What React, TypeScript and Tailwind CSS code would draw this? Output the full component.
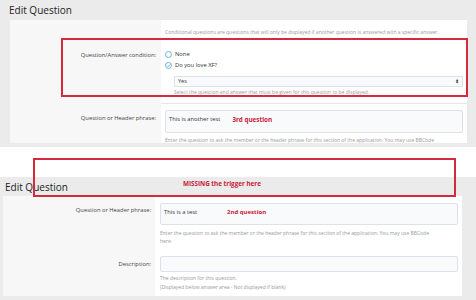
import React from "react";

const Radio = ({ checked }: { checked?: boolean }) => (
  <svg width="7" height="7" viewBox="0 0 14 14" className="shrink-0">
    <circle cx="7" cy="7" r="6" fill="white" stroke="#4a9fd8" strokeWidth="1.6" />
    {checked && (
      <path d="M4 7.2 L6.2 9.4 L10.2 4.8" fill="none" stroke="#4a9fd8" strokeWidth="1.6" />
    )}
  </svg>
);

export default function App() {
  return (
    <div className="relative w-[476px] h-[300px] overflow-hidden bg-white font-['Open_Sans',sans-serif] text-[#333]">
      {/* Top screenshot */}
      <div className="h-[147px] bg-[#ebebeb] pl-[10px] pr-[9px]">
        <div className="h-[20px] flex items-center text-[10px] leading-none text-[#222] -ml-[1px]">Edit Question</div>
        <div className="h-[123px] overflow-hidden grid grid-cols-[151px_1fr] bg-white">
          <div className="bg-[#f7f7f7] flex flex-col items-end pr-[5px] text-[5.8px] text-[#444]">
            <div className="mt-[30px] h-[10px] flex items-center">Question/Answer condition:</div>
            <div className="mt-[53px] h-[10px] flex items-center">Question or Header phrase:</div>
          </div>
          <div className="flex flex-col pl-[4px] pr-[4px]">
            <div className="mt-[9px] h-[8px] flex items-center text-[5px] text-[#999] whitespace-nowrap">
              Conditional questions are questions that will only be displayed if another question is answered with a specific answer.
            </div>
            <div className="mt-[12px] h-[10px] flex items-center gap-[3px] text-[5.8px]">
              <Radio />
              <span>None</span>
            </div>
            <div className="mt-[1px] h-[10px] flex items-center gap-[3px] text-[5.8px]">
              <Radio checked />
              <span>Do you love XF?</span>
            </div>
            <div className="mt-[6px] ml-[9px] h-[11px] flex items-center justify-between border border-[#dce2e8] bg-[#f8fafc] rounded-[1px] pl-[3px] pr-[3px] text-[5.5px]">
              <span>Yes</span>
              <span className="text-[5px] leading-none text-[#333]">⬍</span>
            </div>
            <div className="mt-[2px] ml-[9px] h-[8px] flex items-center text-[5px] text-[#999] whitespace-nowrap">
              Select the question and answer that must be given for this question to be displayed.
            </div>
            <div className="mt-[6px] -ml-[4px] -mr-[4px] border-t border-[#e6e6e6]"></div>
            <div className="mt-[6px] h-[23px] border border-[#dce2e8] bg-[#f8fafc] rounded-[2px] pl-[3px] pt-[4px] text-[5.8px] flex items-start">
              <span>This is another test</span>
              <span className="ml-[12px] font-bold text-[#c8203a] text-[6.3px]">3rd question</span>
            </div>
            <div className="mt-[4px] h-[8px] flex items-center text-[5px] text-[#999] whitespace-nowrap">
              Enter the question to ask the member or the header phrase for this section of the application. You may use BBCode
            </div>
          </div>
        </div>
      </div>

      {/* white gap */}
      <div className="h-[30px] bg-white"></div>

      {/* Bottom screenshot */}
      <div className="h-[123px] bg-[#ebebeb] pl-[3px] pr-[14px]">
        <div className="h-[19px] flex items-center pl-[2px] text-[10px] leading-none text-[#222]">Edit Question</div>
        <div className="h-[100px] grid grid-cols-[152px_1fr] bg-white">
          <div className="bg-[#f7f7f7] flex flex-col items-end pr-[4px] text-[5.8px] text-[#444]">
            <div className="mt-[9px] h-[10px] flex items-center">Question or Header phrase:</div>
            <div className="mt-[44px] h-[10px] flex items-center">Description:</div>
          </div>
          <div className="flex flex-col pl-[5px] pr-[4px]">
            <div className="mt-[7px] h-[22px] border border-[#dce2e8] bg-[#f8fafc] rounded-[2px] pl-[3px] pt-[4px] text-[5.8px] flex items-start">
              <span>This is a test</span>
              <span className="ml-[30px] font-bold text-[#c8203a] text-[6px]">2nd question</span>
            </div>
            <div className="mt-[4px] text-[5px] leading-[8px] text-[#999]">
              <div className="whitespace-nowrap">Enter the question to ask the member or the header phrase for this section of the application. You may use BBCode</div>
              <div>here.</div>
            </div>
            <div className="mt-[11px] h-[16px] border border-[#dce2e8] bg-[#f8fafc] rounded-[2px]"></div>
            <div className="mt-[2px] text-[5px] leading-[8.5px] text-[#999]">
              <div>The description for this question.</div>
              <div>(Displayed below answer area - Not displayed if blank)</div>
            </div>
          </div>
        </div>
      </div>

      {/* Red annotation boxes */}
      <div className="absolute left-[61px] top-[38px] w-[407px] h-[59px] border-2 border-[#d42a3c]"></div>
      <div className="absolute left-[33px] top-[158px] w-[423px] h-[39px] border-2 border-[#d42a3c] pl-[148px] pt-[8px]">
        <span className="font-bold text-[6.3px] text-[#c8203a] leading-none">MISSING the trigger here</span>
      </div>
    </div>
  );
}
